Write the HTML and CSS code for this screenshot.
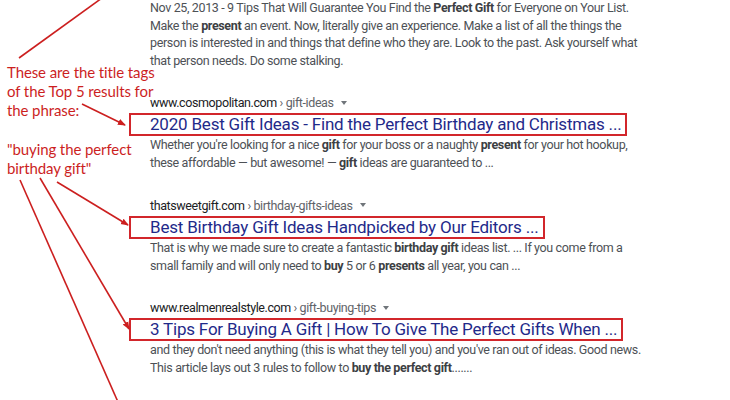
FILE: index.html
```html
<!DOCTYPE html>
<html>
<head>
<meta charset="utf-8">
<link rel="stylesheet" href="styles.css">
</head>
<body>
<div class="page">
  <main class="results">
    <section class="result first">
      <p class="snippet">Nov 25, 2013 - 9 Tips That Will Guarantee You Find the <b>Perfect Gift</b> for Everyone on Your List.<br>Make the <b>present</b> an event. Now, literally give an experience. Make a list of all the things the<br>person is interested in and things that define who they are. Look to the past. Ask yourself what<br>that person needs. Do some stalking.</p>
    </section>
    <section class="result">
      <div class="url"><span class="domain">www.cosmopolitan.com</span><span class="path"> › gift-ideas</span><span class="caret"></span></div>
      <h3 class="title"><span class="box">2020 Best Gift Ideas - Find the Perfect Birthday and Christmas ...</span></h3>
      <p class="snippet">Whether you're looking for a nice <b>gift</b> for your boss or a naughty <b>present</b> for your hot hookup,<br>these affordable — but awesome! — <b>gift</b> ideas are guaranteed to ...</p>
    </section>
    <section class="result">
      <div class="url"><span class="domain">thatsweetgift.com</span><span class="path"> › birthday-gifts-ideas</span><span class="caret"></span></div>
      <h3 class="title"><span class="box">Best Birthday Gift Ideas Handpicked by Our Editors ...</span></h3>
      <p class="snippet">That is why we made sure to create a fantastic <b>birthday gift</b> ideas list. ... If you come from a<br>small family and will only need to <b>buy</b> 5 or 6 <b>presents</b> all year, you can ...</p>
    </section>
    <section class="result">
      <div class="url"><span class="domain">www.realmenrealstyle.com</span><span class="path"> › gift-buying-tips</span><span class="caret"></span></div>
      <h3 class="title"><span class="box">3 Tips For Buying A Gift | How To Give The Perfect Gifts When ...</span></h3>
      <p class="snippet">and they don't need anything (this is what they tell you) and you've ran out of ideas. Good news.<br>This article lays out 3 rules to follow to <b>buy the perfect gift</b>.......</p>
    </section>
  </main>

  <div class="note note-top">These are the title tags<br>of the Top 5 results for<br>the phrase:</div>
  <div class="note note-phrase">"buying the perfect<br>birthday gift"</div>

  <svg class="arrows" width="730" height="400" viewBox="0 0 730 400">
    <defs>
      <marker id="head" markerWidth="8" markerHeight="8" refX="7" refY="4" orient="auto" markerUnits="userSpaceOnUse">
        <path d="M0,0.8 L8,4 L0,7.2 Z" fill="#cc1f1f"/>
      </marker>
    </defs>
    <g stroke="#cc1f1f" stroke-width="1.6" fill="none">
      <line x1="19" y1="58" x2="102" y2="-2"/>
      <line x1="82" y1="104" x2="125" y2="125" marker-end="url(#head)"/>
      <line x1="57" y1="182" x2="128" y2="225" marker-end="url(#head)"/>
      <line x1="40" y1="178" x2="129" y2="329" marker-end="url(#head)"/>
      <line x1="20" y1="180" x2="118" y2="402"/>
    </g>
  </svg>
</div>
</body>
</html>
```

FILE: styles.css
```css
html, body {
  margin: 0;
  padding: 0;
  background: #ffffff;
}

.page {
  position: relative;
  width: 730px;
  height: 400px;
  overflow: hidden;
}

.results {
  display: flex;
  flex-direction: column;
  gap: 22.5px;
  padding-left: 150px;
  margin-top: -1px;
  font-family: Roboto, "Liberation Sans", sans-serif;
}

.result {
  display: flex;
  flex-direction: column;
}

.snippet {
  margin: 0;
  font-size: 12.5px;
  letter-spacing: -0.36px;
  line-height: 17.7px;
  color: #4d5156;
  white-space: nowrap;
}

.result:not(.first) .snippet {
  line-height: 18px;
}

.snippet b {
  color: #3c4043;
  font-weight: 700;
}

.url {
  display: flex;
  align-items: center;
  height: 21px;
  font-size: 12.5px;
  letter-spacing: -0.4px;
  white-space: pre;
}

.domain {
  color: #202124;
}

.path {
  color: #5f6368;
}

.caret {
  width: 0;
  height: 0;
  margin-left: 7px;
  border-left: 3.5px solid transparent;
  border-right: 3.5px solid transparent;
  border-top: 4px solid #70757a;
}

.title {
  margin: 0 0 0 -21px;
  height: 23px;
  font-weight: 400;
  font-size: 17px;
  letter-spacing: -0.2px;
  white-space: nowrap;
}

.box {
  display: inline-block;
  height: 19px;
  line-height: 19px;
  padding: 0 4px 0 19px;
  border: 2px solid #d2262b;
  color: #1f2a8a;
}

.note {
  position: absolute;
  left: 7px;
  font-family: Lato, "Open Sans", sans-serif;
  font-size: 15px;
  letter-spacing: -0.1px;
  line-height: 19px;
  color: #cc1f1f;
  white-space: nowrap;
}

.note-top {
  top: 63px;
}

.note-phrase {
  top: 140px;
}

.arrows {
  position: absolute;
  left: 0;
  top: 0;
}
```
